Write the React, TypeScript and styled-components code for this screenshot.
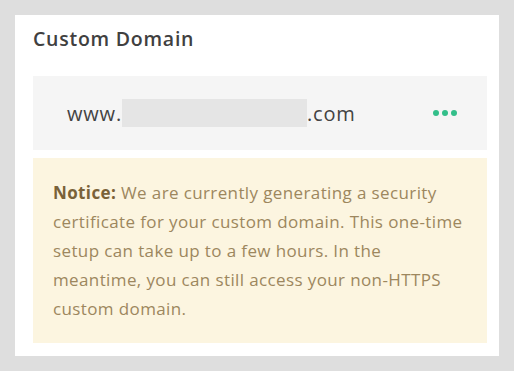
import React from "react";
import styled, { createGlobalStyle } from "styled-components";

const Global = createGlobalStyle`
  html, body { margin: 0; padding: 0; background: #dedede; }
  body { font-family: "Open Sans", sans-serif; }
`;

const Page = styled.div`
  width: 514px;
  height: 371px;
  padding: 15px;
  box-sizing: border-box;
  background: #dedede;
`;

const Card = styled.section`
  width: 484px;
  height: 341px;
  box-sizing: border-box;
  background: #ffffff;
  padding: 0 12px 13px 18px;
  display: flex;
  flex-direction: column;
`;

const Title = styled.h2`
  margin: 0;
  height: 61px;
  display: flex;
  align-items: center;
  padding-bottom: 14px;
  box-sizing: border-box;
  font-family: "Open Sans", sans-serif;
  font-weight: 600;
  font-size: 19.5px;
  color: #404040;
  letter-spacing: 0.75px;
`;

const DomainRow = styled.div`
  height: 74px;
  background: #f5f5f5;
  display: flex;
  align-items: center;
  justify-content: space-between;
  padding: 0 30px 0 34px;
  box-sizing: border-box;
`;

const DomainText = styled.div`
  display: flex;
  align-items: center;
  font-family: "Open Sans", sans-serif;
  font-size: 20px;
  color: #434343;
  letter-spacing: 0.8px;
`;

const Redacted = styled.span`
  display: inline-block;
  width: 185px;
  height: 28px;
  background: #e5e5e5;
`;

const Dots = styled.div`
  display: flex;
  gap: 3px;
  align-items: center;
`;

const Dot = styled.span`
  width: 6px;
  height: 6px;
  border-radius: 50%;
  background: #33bf8a;
`;

const Notice = styled.div`
  margin-top: 8px;
  flex: 1;
  background: #fcf5e0;
  padding: 20px 14px 20px 20px;
  box-sizing: border-box;
  font-family: "Open Sans", sans-serif;
  font-size: 17px;
  line-height: 29px;
  color: #9d875e;
  letter-spacing: 0.38px;
`;

const Strong = styled.strong`
  font-weight: 700;
  color: #7a6238;
`;

export default function App() {
  return (
    <Page>
      <Global />
      <Card>
        <Title>Custom Domain</Title>
        <DomainRow>
          <DomainText>
            www.<Redacted />.com
          </DomainText>
          <Dots>
            <Dot />
            <Dot />
            <Dot />
          </Dots>
        </DomainRow>
        <Notice>
          <Strong>Notice:</Strong> We are currently generating a security
          certificate for your custom domain. This one-time setup can take up
          to a few hours. In the meantime, you can still access your non-HTTPS
          custom domain.
        </Notice>
      </Card>
    </Page>
  );
}
